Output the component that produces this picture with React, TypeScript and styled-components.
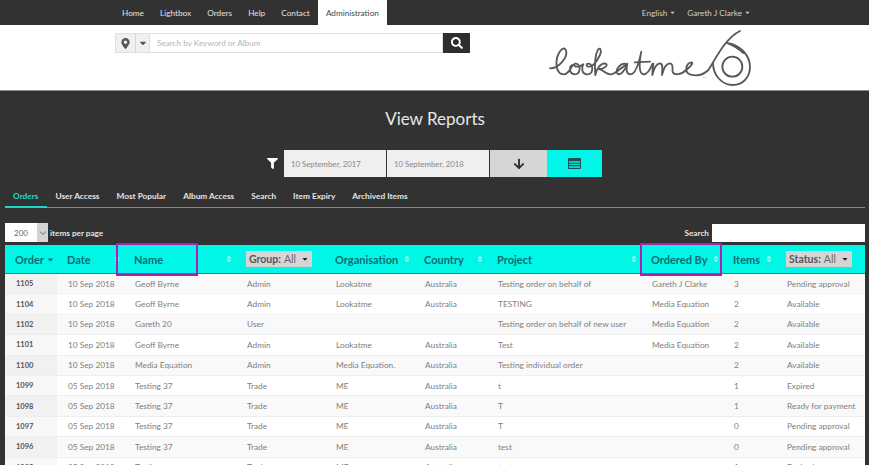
import React from "react";
import styled, { createGlobalStyle } from "styled-components";
import { FaMapMarkerAlt, FaCaretDown, FaSearch, FaFilter, FaArrowDown, FaSort } from "react-icons/fa";

const GlobalStyle = createGlobalStyle`
  html, body {
    margin: 0;
    padding: 0;
    height: 100%;
    overflow: hidden;
    background: #323232;
    font-family: "Lato", "Liberation Sans", sans-serif;
  }
`;

const navLinks = ["Home", "Lightbox", "Orders", "Help", "Contact"];
const tabs = ["Orders", "User Access", "Most Popular", "Album Access", "Search", "Item Expiry", "Archived Items"];

const widths = [52, 67, 112, 89, 89, 73, 154, 82, 53, 89];

type Row = {
  id: string;
  date: string;
  name: string;
  group: string;
  org: string;
  country: string;
  project: string;
  by: string;
  items: string;
  status: string;
};

const row = (
  id: string,
  date: string,
  name: string,
  group: string,
  org: string,
  country: string,
  project: string,
  by: string,
  items: string,
  status: string
): Row => ({ id, date, name, group, org, country, project, by, items, status });

const rows: Row[] = [
  row("1105", "10 Sep 2018", "Geoff Byrne", "Admin", "Lookatme", "Australia", "Testing order on behalf of", "Gareth J Clarke", "3", "Pending approval"),
  row("1104", "10 Sep 2018", "Geoff Byrne", "Admin", "Lookatme", "Australia", "TESTING", "Media Equation", "2", "Available"),
  row("1102", "10 Sep 2018", "Gareth 20", "User", "", "", "Testing order on behalf of new user", "Media Equation", "2", "Available"),
  row("1101", "10 Sep 2018", "Geoff Byrne", "Admin", "Lookatme", "Australia", "Test", "Media Equation", "2", "Available"),
  row("1100", "10 Sep 2018", "Media Equation", "Admin", "Media Equation.", "Australia", "Testing individual order", "", "2", "Available"),
  row("1099", "05 Sep 2018", "Testing 37", "Trade", "ME", "Australia", "t", "", "1", "Expired"),
  row("1098", "05 Sep 2018", "Testing 37", "Trade", "ME", "Australia", "T", "", "1", "Ready for payment"),
  row("1097", "05 Sep 2018", "Testing 37", "Trade", "ME", "Australia", "T", "", "0", "Pending approval"),
  row("1096", "05 Sep 2018", "Testing 37", "Trade", "ME", "Australia", "test", "", "0", "Pending approval"),
  row("1095", "05 Sep 2018", "Testing", "Trade", "ME", "Australia", "test", "", "1", "Expired"),
];

export default function App(): React.ReactElement {
  return (
    <Page>
      <GlobalStyle />
      <TopBar>
        <NavList>
          {navLinks.map((link) => (
            <NavLink key={link}>{link}</NavLink>
          ))}
          <ActiveNavLink>Administration</ActiveNavLink>
        </NavList>
        <UserMenu>
          <UserLink>
            English <FaCaretDown size={7} />
          </UserLink>
          <UserLink>
            Gareth J Clarke <FaCaretDown size={7} />
          </UserLink>
        </UserMenu>
      </TopBar>

      <Header>
        <SearchGroup>
          <PinButton>
            <FaMapMarkerAlt size={11} />
          </PinButton>
          <CaretButton>
            <FaCaretDown size={10} />
          </CaretButton>
          <SearchInput>Search by Keyword or Album</SearchInput>
          <SearchButton>
            <FaSearch size={12} />
          </SearchButton>
        </SearchGroup>
        <Logo />
      </Header>

      <Main>
        <Title>View Reports</Title>
        <FilterRow>
          <FilterIcon>
            <FaFilter size={11} />
          </FilterIcon>
          <DateBox>10 September, 2017</DateBox>
          <DateBox>10 September, 2018</DateBox>
          <DownloadButton>
            <FaArrowDown size={12} />
          </DownloadButton>
          <CalendarButton>
            <CalendarIcon />
          </CalendarButton>
        </FilterRow>

        <Tabs>
          {tabs.map((tab, i) => (
            <Tab key={tab} $active={i === 0}>
              {tab}
            </Tab>
          ))}
        </Tabs>

        <TableTools>
          <PerPage>
            <PageSize>
              <PageSizeValue>200</PageSizeValue>
              <PageSizeArrow>
                <ChevronIcon />
              </PageSizeArrow>
            </PageSize>
            <PerPageLabel>items per page</PerPageLabel>
          </PerPage>
          <TableSearch>
            Search
            <TableSearchBox />
          </TableSearch>
        </TableTools>

        <Table>
          <colgroup>
            {widths.map((w, i) => (
              <col key={i} style={{ width: w }} />
            ))}
          </colgroup>
          <thead>
            <tr>
              <HeadCell>
                Order <FaCaretDown size={9} />
              </HeadCell>
              <SortHead label="Date" />
              <SortHead label="Name" markLeft={-8} />
              <HeadCell>
                <HeadSelect>
                  <b>Group:</b> All <FaCaretDown size={8} />
                </HeadSelect>
              </HeadCell>
              <SortHead label="Organisation" />
              <SortHead label="Country" />
              <SortHead label="Project" />
              <SortHead label="Ordered By" markLeft={-1} />
              <SortHead label="Items" />
              <HeadCell>
                <HeadSelect>
                  <b>Status:</b> All <FaCaretDown size={8} />
                </HeadSelect>
              </HeadCell>
            </tr>
          </thead>
          <tbody>
            {rows.map((r) => (
              <tr key={r.id}>
                <IdCell>{r.id}</IdCell>
                <Cell>{r.date}</Cell>
                <Cell>{r.name}</Cell>
                <Cell>{r.group}</Cell>
                <Cell>{r.org}</Cell>
                <Cell>{r.country}</Cell>
                <Cell>{r.project}</Cell>
                <Cell>{r.by}</Cell>
                <Cell>{r.items}</Cell>
                <Cell>{r.status}</Cell>
              </tr>
            ))}
          </tbody>
        </Table>
      </Main>
    </Page>
  );
}

function SortHead({ label, markLeft }: { label: string; markLeft?: number }): React.ReactElement {
  return (
    <HeadCell>
      {label}
      <SortIcon>
        <FaSort size={8} />
      </SortIcon>
      {markLeft !== undefined && <Highlight $left={markLeft} />}
    </HeadCell>
  );
}

function CalendarIcon(): React.ReactElement {
  return (
    <svg width="13" height="11" viewBox="0 0 13 11">
      <rect x="0" y="0" width="13" height="11" rx="1" fill="#1f4f55" />
      <rect x="1" y="3" width="11" height="7" fill="#00d8cc" />
      <path d="M1 5.3h11M1 7.6h11" stroke="#1f4f55" strokeWidth="1" />
    </svg>
  );
}

function ChevronIcon(): React.ReactElement {
  return (
    <svg width="8" height="6" viewBox="0 0 8 6">
      <path d="M1 1.5l3 3 3-3" fill="none" stroke="#666" strokeWidth="1" />
    </svg>
  );
}

// viewBox is the reference logo area at 3x, one continuous pen line plus the "6"
function Logo(): React.ReactElement {
  return (
    <LogoMark width="220" height="65" viewBox="0 0 660 195">
      <g fill="none" stroke="#585858" strokeWidth="5.5" strokeLinecap="round" strokeLinejoin="round">
        <path
          d="M30 130 C55 130 85 98 78 76 C72 62 55 76 50 105 C47 130 55 148 72 148 C84 148 92 132 98 120
             C88 122 85 146 104 148 C122 148 124 118 108 116 C99 115 100 125 112 125 C120 125 125 122 130 118
             C124 128 124 147 142 148 C160 148 162 118 146 116 C137 115 138 125 148 125 C160 125 172 106 180 90
             C186 74 180 66 174 74 C165 90 164 125 166 150
             C170 130 182 115 194 115 C207 116 198 132 177 132 C192 135 196 148 212 148 C226 148 240 128 262 118
             C240 110 226 135 232 145 C240 155 256 135 262 116 C258 132 258 148 272 148 C288 148 298 108 304 80
             C298 108 294 148 312 148 C324 148 332 130 338 116"
        />
        <path d="M284 112 L330 110" />
        <path
          d="M340 116 C338 130 337 140 337 150 C342 130 350 115 360 115 C371 116 366 135 366 150
             C371 130 380 115 390 115 C402 116 396 132 398 140 C402 152 424 150 442 132 C456 120 462 110 452 113
             C438 116 432 142 450 148 C470 154 490 150 505 135 C525 105 555 40 600 18"
        />
        <path d="M519 114 C519 150 545 180 579 180 C610 180 630 155 630 126 C630 90 600 60 561 54 C580 62 598 72 609 84" />
        <circle cx="577" cy="125" r="30" />
      </g>
      <LogoTrademark x="488" y="160">
        TM
      </LogoTrademark>
    </LogoMark>
  );
}

const Page = styled.div`
  width: 869px;
  height: 465px;
  overflow: hidden;
  background: #323232;
`;

const TopBar = styled.div`
  height: 25px;
  display: flex;
  justify-content: space-between;
  padding: 0 118px 0 114px;
  background: #323232;
  font-size: 8.2px;
`;

const NavList = styled.nav`
  display: flex;
`;

const NavLink = styled.a`
  display: flex;
  align-items: center;
  padding: 0 8.1px;
  color: #e2e2e2;
`;

const ActiveNavLink = styled(NavLink)`
  background: #fff;
  color: #444;
`;

const UserMenu = styled.div`
  display: flex;
  gap: 11px;
  align-items: center;
`;

const UserLink = styled.a`
  color: #cfcfcf;
  display: flex;
  align-items: center;
  gap: 2px;
`;

const Header = styled.header`
  height: 66px;
  box-sizing: border-box;
  display: flex;
  justify-content: space-between;
  align-items: flex-start;
  padding: 8px 115px 0 115px;
  background: #fff;
  border-bottom: 1px solid #8b8b8b;
`;

const SearchGroup = styled.div`
  width: 355px;
  height: 20px;
  display: flex;
  align-items: stretch;
`;

const AddonButton = styled.div`
  display: flex;
  align-items: center;
  justify-content: center;
  background: #f0f0f0;
  color: #555;
  border: 1px solid #e0e0e0;
  box-sizing: border-box;
`;

const PinButton = styled(AddonButton)`
  width: 21px;
  border-right-color: #d8d8d8;
`;

const CaretButton = styled(AddonButton)`
  width: 14px;
  border-left: 0;
`;

const SearchInput = styled.div`
  flex: 1;
  display: flex;
  align-items: center;
  padding-left: 7px;
  font-size: 8.2px;
  color: #b5b5b5;
  border: 1px solid #e0e0e0;
  border-left: 0;
`;

const SearchButton = styled.div`
  width: 27px;
  display: flex;
  align-items: center;
  justify-content: center;
  background: #2e2e2e;
  color: #fff;
`;

const LogoMark = styled.svg`
  margin: -8px -6px 0 0;
  flex: none;
`;

const LogoTrademark = styled.text`
  font-size: 8px;
  fill: #888;
`;

const Main = styled.main`
  padding: 0 4px 0 5px;
`;

const Title = styled.h1`
  margin: 0;
  padding-top: 17px;
  height: 38px;
  box-sizing: content-box;
  font-size: 17px;
  line-height: 22px;
  font-weight: 400;
  text-align: center;
  color: #e8e8e8;
`;

const FilterRow = styled.div`
  display: flex;
  align-items: stretch;
  height: 27px;
  padding-left: 262px;
  margin-top: 4px;
`;

const FilterIcon = styled.div`
  width: 17px;
  display: flex;
  align-items: center;
  color: #fff;
`;

const DateBox = styled.div`
  width: 102px;
  margin-right: 1px;
  display: flex;
  align-items: center;
  padding-left: 7px;
  box-sizing: border-box;
  background: #efefef;
  color: #888;
  font-size: 7.8px;
`;

const DownloadButton = styled.div`
  width: 57px;
  display: flex;
  align-items: center;
  justify-content: center;
  background: #d6d6d6;
  color: #2e2e2e;
`;

const CalendarButton = styled.div`
  width: 55px;
  display: flex;
  align-items: center;
  justify-content: center;
  background: #00f7e8;
`;

const Tabs = styled.div`
  display: flex;
  height: 23px;
  margin-top: 8px;
  box-sizing: border-box;
  border-bottom: 1px solid #8a8a8a;
`;

const Tab = styled.div<{ $active?: boolean }>`
  height: 23px;
  box-sizing: border-box;
  padding: 0 9px 0 8px;
  display: flex;
  align-items: center;
  font-size: 8.3px;
  font-weight: 700;
  color: ${(props) => (props.$active ? "#1fd6cb" : "#e4e4e4")};
  border-bottom: 2px solid ${(props) => (props.$active ? "#1fd6cb" : "transparent")};
`;

const TableTools = styled.div`
  height: 37px;
  display: flex;
  justify-content: space-between;
  align-items: flex-start;
  padding-top: 15px;
  box-sizing: border-box;
`;

const PerPage = styled.div`
  display: flex;
  align-items: center;
  gap: 2px;
  height: 19px;
  font-size: 8.2px;
  font-weight: 700;
  color: #e4e4e4;
`;

const PerPageLabel = styled.span`
  padding-top: 1px;
`;

const PageSize = styled.div`
  width: 43px;
  height: 19px;
  display: flex;
  background: #fff;
`;

const PageSizeValue = styled.span`
  flex: 1;
  display: flex;
  align-items: center;
  padding-left: 9px;
  font-size: 8px;
  font-weight: 400;
  color: #666;
`;

const PageSizeArrow = styled.span`
  width: 11px;
  display: flex;
  align-items: center;
  justify-content: center;
  background: #d4d4d4;
`;

const TableSearch = styled.div`
  display: flex;
  align-items: center;
  gap: 3px;
  height: 19px;
  font-size: 8.2px;
  font-weight: 700;
  color: #e4e4e4;
`;

const TableSearchBox = styled.div`
  width: 153px;
  height: 18px;
  background: #fff;
`;

const Table = styled.table`
  width: 860px;
  table-layout: fixed;
  border-collapse: collapse;
  background: #fff;

  tbody tr:nth-child(odd) {
    background: #f9f9f9;
  }

  tbody tr:nth-child(even) td:first-child {
    background: #f7f7f7;
  }
`;

const HeadCell = styled.th`
  position: relative;
  height: 28.5px;
  padding: 0 0 0 10px;
  box-sizing: border-box;
  background: #00f7e8;
  color: #0b6c70;
  border-bottom: 1px solid #1a8f8c;
  font-size: 11px;
  font-weight: 700;
  text-align: left;
  white-space: nowrap;
`;

const SortIcon = styled.span`
  position: absolute;
  right: 3px;
  top: 10px;
  color: #a8f5f0;
  line-height: 0;
`;

const Highlight = styled.span<{ $left: number }>`
  position: absolute;
  left: ${(props) => props.$left}px;
  top: -2px;
  width: 82px;
  height: 33px;
  box-sizing: border-box;
  border: 2px solid #b01fb0;
  pointer-events: none;
`;

const HeadSelect = styled.span`
  display: inline-flex;
  align-items: center;
  gap: 3px;
  height: 16px;
  padding: 0 3px;
  background: #d5d5d5;
  color: #666;
  font-size: 10.5px;
  font-weight: 400;

  b {
    color: #555;
    font-weight: 700;
  }

  svg {
    color: #222;
    margin-left: 2px;
  }
`;

const Cell = styled.td`
  height: 20.4px;
  padding: 0 0 0 11px;
  box-sizing: border-box;
  border-top: 1px solid #eeeeee;
  font-size: 8.3px;
  color: #808080;
  white-space: nowrap;
`;

const IdCell = styled(Cell)`
  background: #f1f1f1;
  font-size: 7.5px;
  font-weight: 700;
  color: #555;
`;
